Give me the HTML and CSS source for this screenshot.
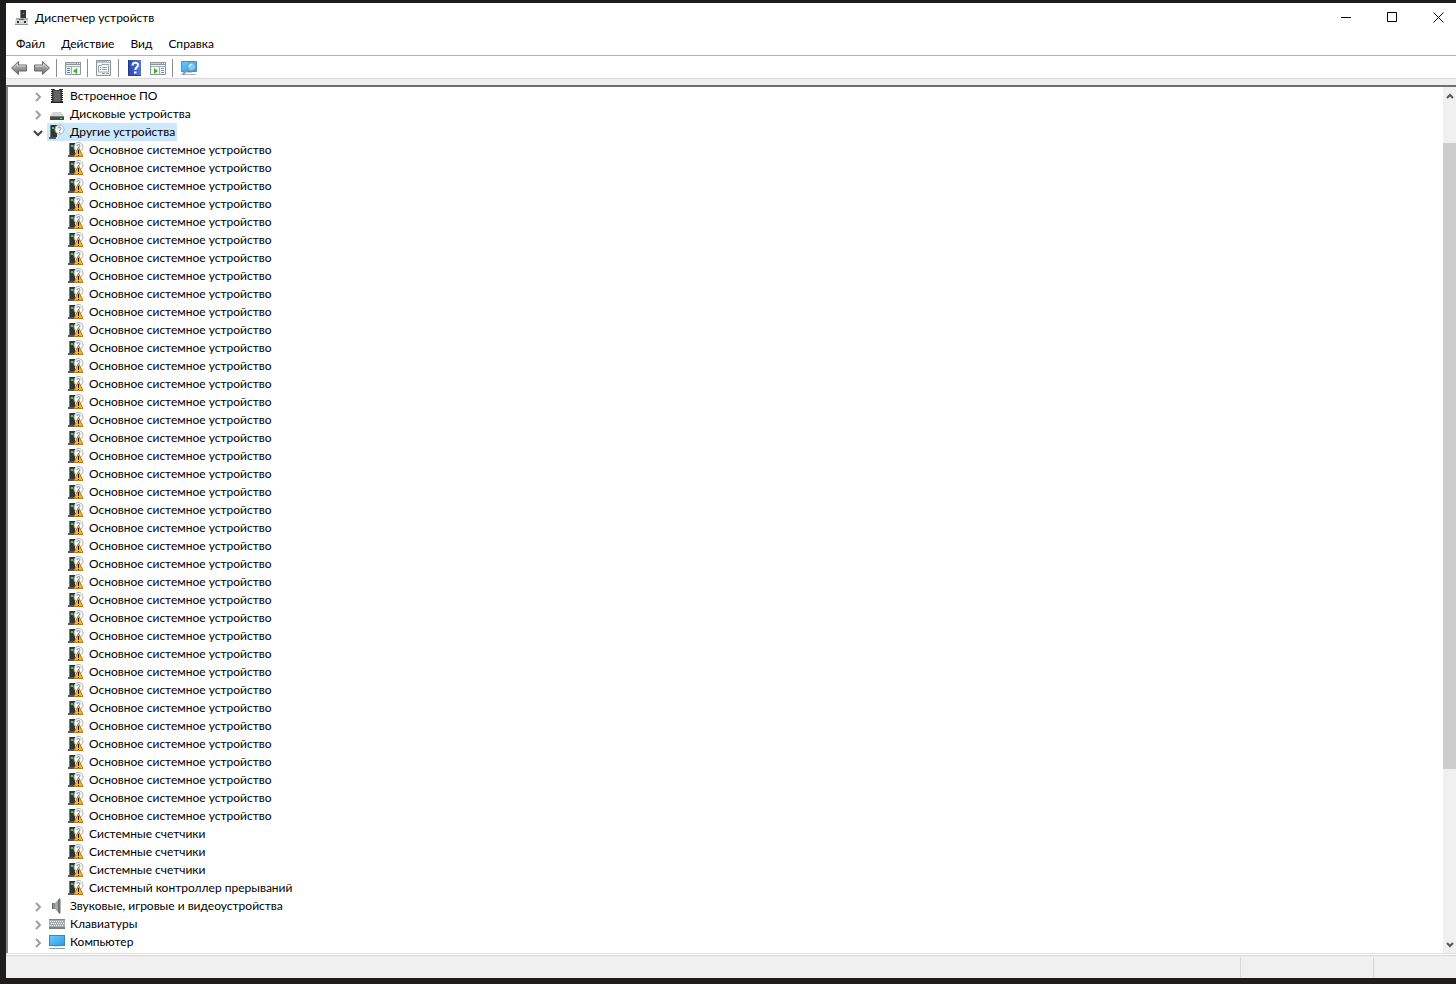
FILE: index.html
```
<!DOCTYPE html>
<html lang="ru">
<head>
    <meta charset="UTF-8">
    <meta name="viewport" content="width=device-width, initial-scale=1.0">
    <title>Диспетчер устройств</title>
    <link rel="stylesheet" href="styles.css">
</head>
<body>
    <!-- Набор значков -->
    <svg class="sprite" aria-hidden="true">
        <defs>
            <linearGradient id="gray" x1="0" y1="0" x2="0" y2="1">
                <stop offset="0" stop-color="#c8c8c8"/>
                <stop offset="1" stop-color="#6c6c6c"/>
            </linearGradient>
            <linearGradient id="screen" x1="0" y1="0" x2="1" y2="1">
                <stop offset="0" stop-color="#6cc8fb"/>
                <stop offset="1" stop-color="#2a9df0"/>
            </linearGradient>
            <linearGradient id="help" x1="0" y1="0" x2="1" y2="0">
                <stop offset="0" stop-color="#2747a8"/>
                <stop offset="1" stop-color="#5478dc"/>
            </linearGradient>
        </defs>

        <symbol id="i-manager" viewBox="0 0 16 16">
            <path d="M6 0h6v9H6z" fill="#333638"/>
            <path d="M6 0h1v9H6z" fill="#85898a"/>
            <path d="M9 3h1v1H9z" fill="#35e04b"/>
            <path d="M2 8h12v2H2z" fill="#a9acae"/>
            <path d="M1 10h13v5H1z" fill="#d6d8d9"/>
            <path d="M1 14h13v1H1z" fill="#8e9193"/>
            <path d="M3 11h2v2H3zM10 11h2v2h-2z" fill="#2b2d2f"/>
            <path d="M5 9h5v1H5z" fill="#5c5f61"/>
        </symbol>

        <symbol id="i-left" viewBox="0 0 18 16">
            <path d="M1.5 8 8.500 1.500V5H16.500V11H8.500V14.500z" fill="url(#gray)" stroke="#6a6a6a"/>
            <path d="M3.500 8 7.500 4V6H15.500" fill="none" stroke="#d4d4d4"/>
        </symbol>
        <symbol id="i-right" viewBox="0 0 18 16">
            <path d="M16.500 8 9.500 1.500V5H1.500V11H9.500V14.500z" fill="url(#gray)" stroke="#6a6a6a"/>
            <path d="M2.500 6H10.500V4L14.500 8" fill="none" stroke="#d4d4d4"/>
        </symbol>

        <symbol id="i-tree" viewBox="0 0 16 16">
            <path d="M.5 2.500h15v12H.5z" fill="#f4f6f7" stroke="#8b959d"/>
            <path d="M0 2h16v3H0z" fill="#8b959d"/>
            <path d="M1 3h10v1H1z" fill="#cbd2d7"/>
            <path d="M12 3h1v1h-1zM14 3h1v1h-1z" fill="#fff"/>
            <path d="M0 6h16v1H0zM6 7h1v8H6z" fill="#a5adb4"/>
            <path d="M2 8h3v1H2zM2 10h3v1H2zM2 12h3v1H2z" fill="#4a86b8"/>
            <path d="M12 8v6L8 11z" fill="#38b52c"/>
        </symbol>
        <symbol id="i-props" viewBox="0 0 16 16">
            <path d="M.5 .5h14v15H.5z" fill="#f3f6f8" stroke="#8b959d"/>
            <path d="M1 1h13v2H1z" fill="#b4bdc4"/>
            <path d="M11 1h1v1h-1zM13 1h1v1h-1z" fill="#fff"/>
            <path d="M2.500 5.500H6V4.500h6.500v7.500h-10z" fill="#fff" stroke="#9aa7b0"/>
            <path d="M4 7h1v1H4zM4 9h1v1H4z" fill="#2aa7e0"/>
            <path d="M6 7h5v1H6zM6 9h5v1H6z" fill="#94a0a8"/>
            <path d="M6 13h3v1H6z" fill="#36b8ec"/>
            <path d="M10 13h3v1h-3z" fill="#94a0a8"/>
        </symbol>
        <symbol id="i-help" viewBox="0 0 16 16">
            <path d="M1 0h13v16H1z" fill="url(#help)"/>
            <path d="M1 0h1v16H1z" fill="#20388b"/>
            <path d="M1 15h13v1H1z" fill="#26429e"/>
            <path d="M5.500 5.500C5.500 1.800 11 2 11 5c0 2.200-2.700 2.300-2.700 5" fill="none" stroke="#fff" stroke-width="2"/>
            <path d="M7 11.500h2.500v2H7z" fill="#fff"/>
        </symbol>
        <symbol id="i-action" viewBox="0 0 16 16">
            <path d="M.5 2.500h15v12H.5z" fill="#f4f6f7" stroke="#8b959d"/>
            <path d="M0 2h16v3H0z" fill="#8b959d"/>
            <path d="M1 3h10v1H1z" fill="#cbd2d7"/>
            <path d="M12 3h1v1h-1zM14 3h1v1h-1z" fill="#fff"/>
            <path d="M0 6h16v1H0zM9 7h1v8H9z" fill="#a5adb4"/>
            <path d="M11 8h3v1h-3zM11 10h3v1h-3zM11 12h3v1h-3z" fill="#7b99b0"/>
            <path d="M4 8v6l4-3z" fill="#38b52c"/>
        </symbol>
        <symbol id="i-scan" viewBox="0 0 18 16">
            <path d="M1.500 1.500h15v10H1.500z" fill="url(#screen)" stroke="#3d93c6"/>
            <path d="M1 14h15v1H1z" fill="#a4b4be"/>
            <path d="M7 12h5v1H7z" fill="#c4cdd3"/>
            <path d="M8.500 9 3 14" stroke="#7f97a7" stroke-width="2"/>
            <circle cx="11.500" cy="6.500" r="4" fill="#7fcdf8" stroke="#8299a8"/>
            <path d="M9.500 6.500a2 2 0 0 1 2-2" fill="none" stroke="#fff"/>
        </symbol>

        <symbol id="i-chip" viewBox="0 0 16 16">
            <path d="M3 1h3v1h4V1h3v14H3z" fill="#4c4c4c"/>
            <path d="M3 1h2v1h6V1h2v1H3zM3 14h10v1H3z" fill="#222"/>
            <path d="M5 3h6v10H5z" fill="#656565"/>
            <path d="M2 1h2v1H2zM2 3h2v1H2zM2 5h2v1H2zM2 7h2v1H2zM2 9h2v1H2zM2 11h2v1H2zM2 13h2v2H2zM12 1h2v1h-2zM12 3h2v1h-2zM12 5h2v1h-2zM12 7h2v1h-2zM12 9h2v1h-2zM12 11h2v1h-2zM12 13h2v2h-2z" fill="#222"/>
        </symbol>
        <symbol id="i-disk" viewBox="0 0 16 16">
            <path d="M4 6h8l3 4H1z" fill="#d3d5d6"/>
            <path d="M1 10h14v4H1z" fill="#46494b"/>
            <path d="M1 10h14v1H1z" fill="#77797b"/>
            <path d="M11 12h2v1h-2z" fill="#38e452"/>
        </symbol>
        <symbol id="i-unknown" viewBox="0 0 16 16">
            <path d="M1 1h7v12H1z" fill="#323536"/>
            <path d="M1 1h1v12H1z" fill="#777b7d"/>
            <path d="M0 13h7v2H0z" fill="#55595b"/>
            <path d="M3 3h2v2H3z" fill="#39dc4a"/>
            <circle cx="10.500" cy="5.500" r="4.500" fill="#fff" stroke="#a9adb0"/>
            <path d="M9 4.500c0-2 3-2 3 0 0 1.200-1.500 1-1.500 2.500M10.500 8v1" fill="none" stroke="#3f7fae"/>
        </symbol>
        <symbol id="i-warning" viewBox="0 0 16 16">
            <path d="M1 1h6v12H1z" fill="#323536"/>
            <path d="M1 1h1v12H1z" fill="#777b7d"/>
            <path d="M0 13h6v2H0z" fill="#55595b"/>
            <path d="M3 3h2v2H3z" fill="#39dc4a"/>
            <circle cx="10.500" cy="5" r="4.500" fill="#fff" stroke="#a9adb0"/>
            <path d="M9 4c0-2 3-2 3 0 0 1-1.500 1-1.500 2" fill="none" stroke="#3f7fae"/>
            <path d="M10.500 5.500 15 14.500H6z" fill="#f8b334" stroke="#b97a14"/>
            <path d="M10 8h1v4h-1zM10 13h1v1h-1z" fill="#1c1200"/>
        </symbol>
        <symbol id="i-sound" viewBox="0 0 16 16">
            <path d="M3 5h3v6H3z" fill="#8d9092"/>
            <path d="M3 5h1v6H3z" fill="#5f6264"/>
            <path d="M6 5 11 0v16l-5-5z" fill="#a3a7a9"/>
            <path d="M9 2 11 0v16l-2-2z" fill="#6f7375"/>
            <path d="M11 1h1v14h-1z" fill="#b2b6b8"/>
        </symbol>
        <symbol id="i-keyboard" viewBox="0 0 16 16">
            <path d="M0 3h16v10H0z" fill="#a6abb0"/>
            <path d="M0 3h16v1H0z" fill="#7d8389"/>
            <path d="M0 11h16v2H0z" fill="#7b8187"/>
            <path d="M1 5.500h14M2 7.500h13M1 9.500h14" stroke="#f5f6f7" stroke-dasharray="1 1"/>
        </symbol>
        <symbol id="i-computer" viewBox="0 0 16 16">
            <path d="M0 1h16v11H0z" fill="#2f8ac8"/>
            <path d="M1 2h14v9H1z" fill="url(#screen)"/>
            <path d="M6 12h4v1H6z" fill="#d5dade"/>
            <path d="M0 14h16v1H0z" fill="#8fa1ae"/>
        </symbol>
    </svg>

    <div class="window">
        <header class="titlebar">
            <svg class="icon"><use href="#i-manager"/></svg>
            <h1>Диспетчер устройств</h1>
            <div class="window-buttons">
                <button type="button" aria-label="Свернуть"><svg viewBox="0 0 11 11"><path d="M0 5.500h10"/></svg></button>
                <button type="button" aria-label="Развернуть"><svg viewBox="0 0 11 11"><path d="M.5 .5h9v9h-9z"/></svg></button>
                <button type="button" aria-label="Закрыть"><svg viewBox="0 0 11 11"><path d="M.5 .5l10 10M10.500 .5l-10 10"/></svg></button>
            </div>
        </header>

        <nav class="menu">
            <button type="button">Файл</button>
            <button type="button">Действие</button>
            <button type="button">Вид</button>
            <button type="button">Справка</button>
        </nav>

        <div class="toolbar">
            <button type="button" aria-label="Назад"><svg class="wide"><use href="#i-left"/></svg></button>
            <button type="button" aria-label="Вперед"><svg class="wide"><use href="#i-right"/></svg></button>
            <span class="separator"></span>
            <button type="button" aria-label="Дерево консоли"><svg class="icon"><use href="#i-tree"/></svg></button>
            <span class="separator"></span>
            <button type="button" aria-label="Свойства"><svg class="icon"><use href="#i-props"/></svg></button>
            <span class="separator"></span>
            <button type="button" aria-label="Помощь"><svg class="icon"><use href="#i-help"/></svg></button>
            <button type="button" aria-label="Панель действий"><svg class="icon"><use href="#i-action"/></svg></button>
            <span class="separator"></span>
            <button type="button" aria-label="Обновить конфигурацию"><svg class="wide"><use href="#i-scan"/></svg></button>
        </div>

        <main class="content">
            <ul class="tree" id="tree"></ul>
            <div class="scrollbar">
                <button type="button" aria-label="Вверх"><svg viewBox="0 0 8 6"><path d="M1 5l3-3 3 3"/></svg></button>
                <div class="track"><div class="thumb"></div></div>
                <button type="button" aria-label="Вниз"><svg viewBox="0 0 8 6"><path d="M1 1l3 3 3-3"/></svg></button>
            </div>
        </main>

        <footer class="status">
            <span></span>
            <span></span>
            <span></span>
        </footer>
    </div>

    <script>
        const groups = [
            { name: 'Встроенное ПО', icon: 'chip' },
            { name: 'Дисковые устройства', icon: 'disk' },
            {
                name: 'Другие устройства',
                icon: 'unknown',
                open: true,
                devices: [
                    ...Array(38).fill('Основное системное устройство'),
                    ...Array(3).fill('Системные счетчики'),
                    'Системный контроллер прерываний'
                ]
            },
            { name: 'Звуковые, игровые и видеоустройства', icon: 'sound' },
            { name: 'Клавиатуры', icon: 'keyboard' },
            { name: 'Компьютер', icon: 'computer' }
        ];

        function icon(name) {
            return `<svg class="icon"><use href="#i-${name}"/></svg>`;
        }

        function renderGroup(group) {
            const arrow = group.open ? 'M1 3l4 4 4-4' : 'M3 1l4 4-4 4';
            const devices = (group.devices || [])
                .map(name => `<li class="device">${icon('warning')}<span>${name}</span></li>`)
                .join('');

            return `<li>
                <div class="group${group.open ? ' open' : ''}">
                    <button type="button" class="expander" aria-label="${group.name}"><svg viewBox="0 0 10 10"><path d="${arrow}"/></svg></button>
                    <div class="label">${icon(group.icon)}<span>${group.name}</span></div>
                </div>
                ${devices ? `<ul>${devices}</ul>` : ''}
            </li>`;
        }

        document.getElementById('tree').innerHTML = groups.map(renderGroup).join('');
    </script>
</body>
</html>
```
FILE: styles.css
```
* {
    box-sizing: border-box;
}

body {
    margin: 0;
    background-color: #1e1d1b;
    color: #000;
    font-family: Lato, "Noto Sans", sans-serif;
    font-size: 12px;
    line-height: 18px;
}

button {
    display: flex;
    align-items: center;
    justify-content: center;
    padding: 0;
    border: none;
    background: none;
    color: inherit;
    font: inherit;
}

ul {
    margin: 0;
    padding: 0;
    list-style: none;
}

svg {
    flex: none;
}

.sprite {
    position: absolute;
    width: 0;
    height: 0;
}

.icon {
    width: 16px;
    height: 16px;
}

.wide {
    width: 18px;
    height: 16px;
}

.window {
    display: flex;
    flex-direction: column;
    height: 100vh;
    border: solid #1e1d1b;
    border-width: 3px 0 6px 6px;
    background-color: #fff;
    overflow: hidden;
}

/* Заголовок окна */
.titlebar {
    display: flex;
    align-items: center;
    flex: none;
    height: 29px;
    padding-left: 8px;
}

.titlebar h1 {
    flex: 1;
    margin: 0 0 0 5px;
    font-size: 12px;
    font-weight: normal;
}

.window-buttons {
    display: flex;
    margin-right: -5px;
}

.window-buttons button {
    width: 46px;
    height: 28px;
}

.window-buttons svg {
    width: 11px;
    height: 11px;
    fill: none;
    stroke: #000;
}

.menu {
    display: flex;
    flex: none;
    gap: 16px;
    height: 24px;
    padding-left: 10px;
    border-bottom: 1px solid #b0b0b0;
}

/* Панель инструментов */
.toolbar {
    display: flex;
    align-items: center;
    flex: none;
    height: 23px;
    padding: 2px 0 0 4px;
    border-bottom: 1px solid #dadada;
}

.toolbar button {
    width: 23px;
    height: 20px;
}

.toolbar button:first-child {
    width: 18px;
    margin-right: 2px;
}

.separator {
    width: 1px;
    height: 18px;
    margin: 0 4px 0 3px;
    background-color: #8c8c8c;
}

/* Дерево устройств */
.content {
    display: flex;
    flex: 1;
    min-height: 0;
    margin-top: 6px;
    border-top: 2px solid #6e6e6e;
    border-left: 2px solid #828282;
    box-shadow: 0 -6px 0 #f0f0f0;
}

.tree {
    flex: 1;
    overflow: hidden;
    white-space: nowrap;
}

.group {
    display: flex;
    height: 18px;
    padding-left: 24px;
}

.expander {
    width: 12px;
    height: 20px;
    margin-right: 3px;
}

.expander svg {
    width: 10px;
    height: 10px;
    fill: none;
    stroke: #a0a0a0;
    stroke-width: 2;
}

.label {
    display: flex;
    align-items: center;
    gap: 5px;
    padding: 0 2px;
}

.open .label {
    background-color: #cce8ff;
}

.open .expander svg {
    stroke: #404040;
}

.device {
    display: flex;
    align-items: center;
    gap: 5px;
    height: 18px;
    padding-left: 60px;
}

/* Полоса прокрутки */
.scrollbar {
    display: flex;
    flex-direction: column;
    flex: none;
    width: 13px;
    background-color: #f0f0f0;
}

.scrollbar button {
    height: 17px;
    padding-left: 1px;
}

.scrollbar svg {
    width: 8px;
    height: 6px;
    fill: none;
    stroke: #555;
    stroke-width: 2;
}

.track {
    flex: 1;
    padding-top: 39px;
}

.thumb {
    height: 79%;
    background-color: #cdcdcd;
}

/* Строка состояния */
.status {
    display: flex;
    flex: none;
    height: 25px;
    padding: 1px 0;
    border-top: 1px solid #dfdfdf;
    background-color: #f0f0f0;
    box-shadow: inset 0 1px #fff, inset 0 2px #d7d7d7;
}

.status span {
    width: 83px;
    margin-top: 2px;
    border-left: 1px solid #d7d7d7;
}

.status span:first-child {
    flex: 1;
    border: none;
}

.status span:nth-child(2) {
    width: 133px;
}
```
